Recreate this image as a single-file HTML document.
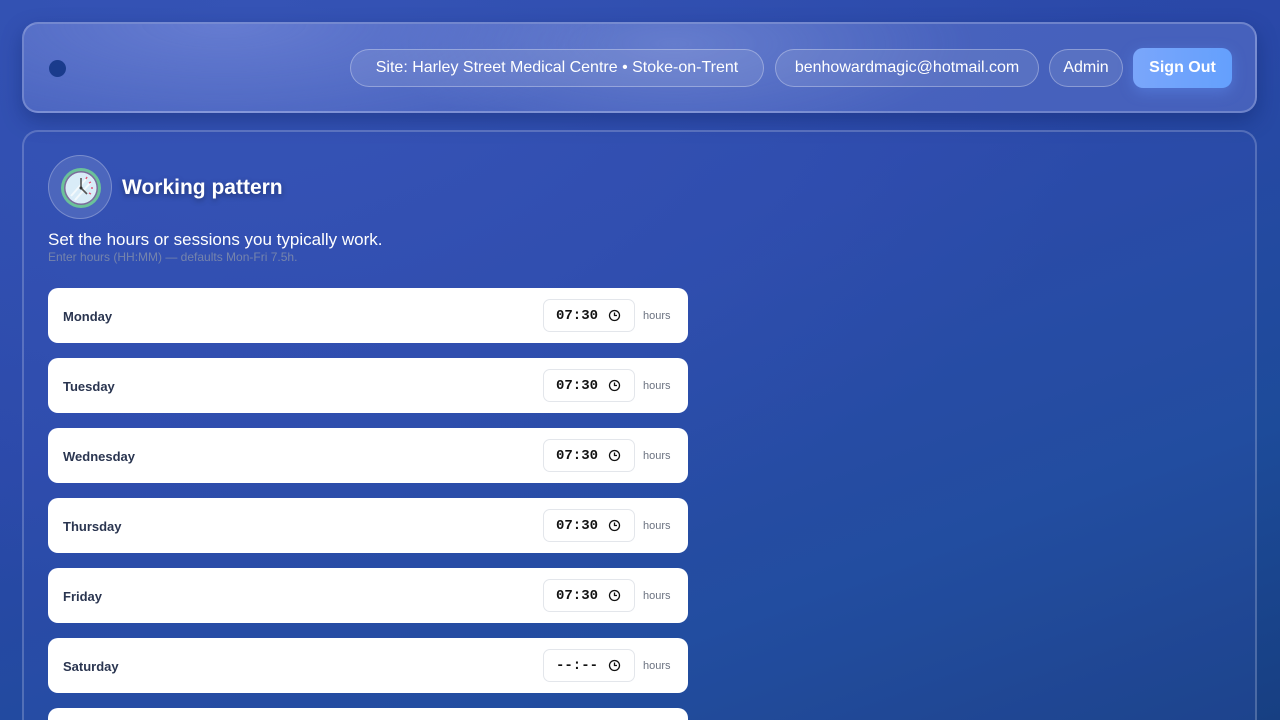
<!DOCTYPE html>
<html><head><meta charset="utf-8"><style>
*{box-sizing:border-box;margin:0;padding:0}
html,body{width:1280px;height:720px;overflow:hidden}
body{font-family:"Liberation Sans",sans-serif;
background:radial-gradient(ellipse at 20% 0%,#3553b5 0%,transparent 60%),linear-gradient(160deg,#2e4eae 0%,#2a48a8 40%,#1d4b9a 75%,#173f82 100%);position:relative}
.hdr{position:absolute;left:22px;top:22px;width:1235px;height:91px;border-radius:16px;border:2px solid rgba(255,255,255,.22);
background:radial-gradient(ellipse 400px 120px at 200px 0px,rgba(120,140,220,.6),transparent),radial-gradient(ellipse 300px 100px at 650px 20px,rgba(130,150,220,.5),transparent),rgba(80,105,195,.75);box-shadow:0 8px 20px rgba(10,30,90,.35)}
.dot{position:absolute;left:25px;top:36px;width:17px;height:17px;border-radius:50%;background:#1a3b8c}
.pill{position:absolute;top:25px;height:38px;border-radius:19px;border:1px solid rgba(255,255,255,.3);background:rgba(255,255,255,.1);color:#fff;font-size:16px;line-height:36px;text-align:center;white-space:nowrap}
.so{position:absolute;left:1109px;top:24px;width:99px;height:40px;border-radius:10px;background:linear-gradient(90deg,#7aa6fb,#64a0fd);color:#fff;font-weight:bold;font-size:16px;text-align:center;line-height:40px;box-shadow:0 4px 14px rgba(100,150,250,.4)}
.main{position:absolute;left:22px;top:130px;width:1235px;height:590px;border-radius:16px 16px 0 0;border:2px solid rgba(255,255,255,.2);border-bottom:none;background:rgba(60,90,190,.18);overflow:hidden}
.ic{position:absolute;left:24px;top:23px;width:64px;height:64px;border-radius:50%;background:rgba(255,255,255,.12);border:1px solid rgba(255,255,255,.25)}
h1{position:absolute;left:98px;top:44px;color:#fff;font-size:21px;text-shadow:0 2px 6px rgba(0,0,0,.35)}
.sub{position:absolute;left:24px;top:98px;color:#fff;font-size:17px}
.hint{position:absolute;left:24px;top:118px;color:rgba(140,150,170,.75);font-size:12px}
.row{position:absolute;left:24px;width:640px;height:55px;background:#fff;border-radius:10px}
.row b{position:absolute;left:15px;top:21px;font-size:13px;color:#2a3550}
.t{position:absolute;left:495px;top:11px;width:92px;height:33px;border:1px solid #e3e6eb;border-radius:7px;font-family:"Liberation Mono",monospace;font-size:14px;font-weight:bold;color:#111;line-height:33px;padding-left:12px}
.t svg{position:absolute;right:13px;top:9px}
.h{position:absolute;left:595px;top:22px;font-size:11px;color:#6b7280}
</style></head><body>
<div class="hdr"><div class="dot"></div>
<div class="pill" style="left:326px;width:414px">Site: Harley Street Medical Centre • Stoke-on-Trent</div>
<div class="pill" style="left:751px;width:264px">benhowardmagic@hotmail.com</div>
<div class="pill" style="left:1025px;width:74px">Admin</div>
<div class="so">Sign Out</div></div>
<div class="main">
<div class="ic"><svg width="64" height="64" viewBox="0 0 64 64"><circle cx="32" cy="32" r="20" fill="#6bc19a"/><circle cx="32" cy="32" r="17" fill="#7c6a9c"/><circle cx="32" cy="32" r="15.5" fill="#d9ecf8"/><path d="M22 40 L38 22 M26 44 L42 26" stroke="#fff" stroke-width="2" opacity=".7"/><path d="M32 22V32L38 38" stroke="#555" stroke-width="1.6" fill="none"/><circle cx="32" cy="32" r="1.5" fill="#333"/><path d="M38 21l-1 2M42 26l-2 1M44 32h-2M42 38l-2-1" stroke="#e05a7a" stroke-width="1.5"/></svg></div>
<h1>Working pattern</h1>
<div class="sub">Set the hours or sessions you typically work.</div>
<div class="hint">Enter hours (HH:MM) — defaults Mon-Fri 7.5h.</div>
<div class="row" style="top:156px"><b>Monday</b><div class="t">07:30<svg width="13" height="13" viewBox="0 0 13 13"><circle cx="6.5" cy="6.5" r="5" fill="none" stroke="#111" stroke-width="1.3"/><path d="M6.5 3.5V6.5H9" fill="none" stroke="#111" stroke-width="1.3"/></svg></div><span class="h">hours</span></div>
<div class="row" style="top:226px"><b>Tuesday</b><div class="t">07:30<svg width="13" height="13" viewBox="0 0 13 13"><circle cx="6.5" cy="6.5" r="5" fill="none" stroke="#111" stroke-width="1.3"/><path d="M6.5 3.5V6.5H9" fill="none" stroke="#111" stroke-width="1.3"/></svg></div><span class="h">hours</span></div>
<div class="row" style="top:296px"><b>Wednesday</b><div class="t">07:30<svg width="13" height="13" viewBox="0 0 13 13"><circle cx="6.5" cy="6.5" r="5" fill="none" stroke="#111" stroke-width="1.3"/><path d="M6.5 3.5V6.5H9" fill="none" stroke="#111" stroke-width="1.3"/></svg></div><span class="h">hours</span></div>
<div class="row" style="top:366px"><b>Thursday</b><div class="t">07:30<svg width="13" height="13" viewBox="0 0 13 13"><circle cx="6.5" cy="6.5" r="5" fill="none" stroke="#111" stroke-width="1.3"/><path d="M6.5 3.5V6.5H9" fill="none" stroke="#111" stroke-width="1.3"/></svg></div><span class="h">hours</span></div>
<div class="row" style="top:436px"><b>Friday</b><div class="t">07:30<svg width="13" height="13" viewBox="0 0 13 13"><circle cx="6.5" cy="6.5" r="5" fill="none" stroke="#111" stroke-width="1.3"/><path d="M6.5 3.5V6.5H9" fill="none" stroke="#111" stroke-width="1.3"/></svg></div><span class="h">hours</span></div>
<div class="row" style="top:506px"><b>Saturday</b><div class="t">--:--<svg width="13" height="13" viewBox="0 0 13 13"><circle cx="6.5" cy="6.5" r="5" fill="none" stroke="#111" stroke-width="1.3"/><path d="M6.5 3.5V6.5H9" fill="none" stroke="#111" stroke-width="1.3"/></svg></div><span class="h">hours</span></div>
<div class="row" style="top:576px;height:14px;border-radius:10px 10px 0 0"></div>
</div>
</body></html>
